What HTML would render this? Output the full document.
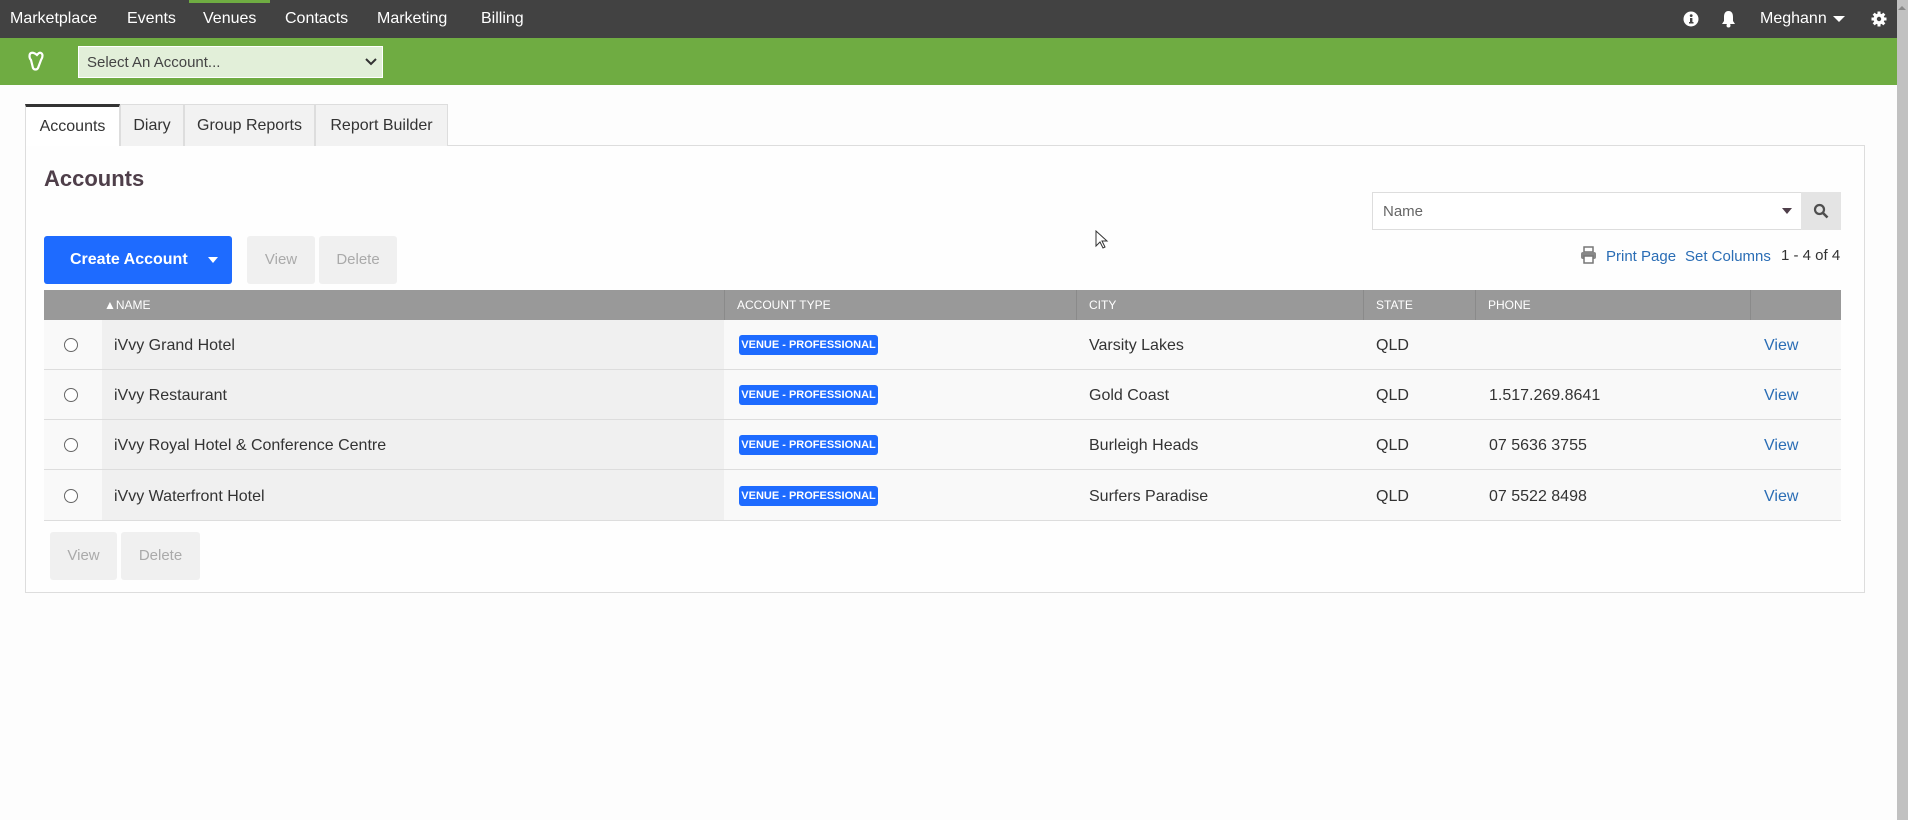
<!DOCTYPE html>
<html><head><meta charset="utf-8"><style>
*{box-sizing:border-box;margin:0;padding:0}
body{width:1908px;height:820px;overflow:hidden;background:#fdfdfd;font-family:"Liberation Sans",sans-serif;color:#333;position:relative}
.a{position:absolute}
.top{left:0;top:0;width:1897px;height:38px;background:#424242}
.nav{color:#fff;font-size:16px;top:10px}
.green{left:0;top:38px;width:1897px;height:47px;background:#6fac42}
.sel{left:78px;top:46px;width:305px;height:32px;background:#e2efd9;border:1px solid #fff;font-size:15px;color:#444;padding:7px 8px}
.tab{top:104px;height:42px;background:#f2f2f2;border:1px solid #ddd;border-bottom:none;font-size:16px;color:#333;text-align:center;line-height:42px}
.box{left:25px;top:145px;width:1840px;height:448px;border:1px solid #ddd;background:#fefefe}
.btn{background:#f0f0f0;color:#aaa;font-size:15px;text-align:center;border-radius:3px}
.th{top:290px;height:30px;background:#999;color:#fff;font-size:12px;line-height:30px}
.row{left:44px;width:1797px;height:50px;background:#f9f9f9;border-bottom:1px solid #ddd}
.cell{font-size:16px;color:#333}
.badge{background:#1e6bff;color:#fff;font-size:11px;font-weight:bold;border-radius:3px;height:20px;line-height:20px;width:139px;text-align:center}
.link{color:#2a6db5;font-size:16px}
.radio{width:14px;height:14px;border:1px solid #666;border-radius:50%;background:#fff}
</style></head><body>
<div class="a top"></div>
<div class="a" style="left:189px;top:0;width:81px;height:3px;background:#6fac42"></div>
<div class="a nav" style="left:10px">Marketplace</div>
<div class="a nav" style="left:127px">Events</div>
<div class="a nav" style="left:203px">Venues</div>
<div class="a nav" style="left:285px">Contacts</div>
<div class="a nav" style="left:377px">Marketing</div>
<div class="a nav" style="left:481px">Billing</div>
<svg class="a" style="left:1683px;top:11px" width="16" height="16" viewBox="0 0 16 16"><circle cx="8" cy="8" r="7.5" fill="#fff"/><rect x="7" y="7" width="2.4" height="5" fill="#424242"/><rect x="6" y="11" width="4.5" height="1.5" fill="#424242"/><circle cx="8.2" cy="4.6" r="1.4" fill="#424242"/></svg>
<svg class="a" style="left:1720px;top:10px" width="17" height="18" viewBox="0 0 17 18"><path d="M8.5 1C5 1 4 4 4 7v4l-2 3h13l-2-3V7c0-3-1-6-4.5-6z" fill="#fff"/><circle cx="8.5" cy="15.5" r="2" fill="#fff"/></svg>
<div class="a nav" style="left:1760px">Meghann</div>
<div class="a" style="left:1833px;top:16px;border:6px solid transparent;border-top:6px solid #fff;border-bottom:none"></div>
<svg class="a" style="left:1871px;top:11px" width="16" height="16" viewBox="0 0 16 16"><g fill="#fff"><circle cx="8" cy="8" r="5.5"/><rect x="6.5" y="0.5" width="3" height="15"/><rect x="0.5" y="6.5" width="15" height="3"/><rect x="6.5" y="0.5" width="3" height="15" transform="rotate(45 8 8)"/><rect x="6.5" y="0.5" width="3" height="15" transform="rotate(-45 8 8)"/></g><circle cx="8" cy="8" r="2.2" fill="#424242"/></svg>
<div class="a green"></div>
<svg class="a" style="left:26px;top:50px" width="22" height="22" viewBox="0 0 22 22"><path d="M5 3C3 4 3 8 5 10l2 8c1 2 4 2 5 0l3-8c2-3 2-6 0-7-2-1-3 1-4 2C10 4 7 2 5 3z" fill="none" stroke="#fff" stroke-width="2.2"/></svg>
<div class="a sel">Select An Account...</div>
<svg class="a" style="left:365px;top:58px" width="12" height="8" viewBox="0 0 12 8"><path d="M1 1l5 5 5-5" fill="none" stroke="#333" stroke-width="2"/></svg>
<div class="a" style="left:1897px;top:0;width:11px;height:820px;background:#c1c1c1"></div>
<div class="a" style="left:1898px;top:6px;border:4px solid transparent;border-bottom:4px solid #888;border-top:none"></div>
<div class="a box"></div>
<div class="a tab" style="left:25px;width:95px;background:#fff;border-top:3px solid #333;height:42px;line-height:40px;z-index:2">Accounts</div>
<div class="a tab" style="left:120px;width:64px">Diary</div>
<div class="a tab" style="left:184px;width:131px">Group Reports</div>
<div class="a tab" style="left:315px;width:133px">Report Builder</div>
<div class="a" style="left:44px;top:166px;font-size:22px;font-weight:bold;color:#4f3f4a">Accounts</div>
<div class="a" style="left:1372px;top:192px;width:430px;height:38px;border:1px solid #ddd;background:#fff;font-size:15px;color:#666;padding:10px 10px">Name</div>
<div class="a" style="left:1782px;top:208px;border:5px solid transparent;border-top:6px solid #4f3f4a;border-bottom:none"></div>
<div class="a" style="left:1801px;top:192px;width:40px;height:38px;background:#e4e4e4"></div>
<svg class="a" style="left:1813px;top:203px" width="16" height="16" viewBox="0 0 16 16"><circle cx="6.5" cy="6.5" r="4.5" fill="none" stroke="#4f4f4f" stroke-width="2.2"/><path d="M10 10l4.5 4.5" stroke="#4f4f4f" stroke-width="2.6"/></svg>
<svg class="a" style="left:1580px;top:246px" width="17" height="18" viewBox="0 0 17 18"><rect x="4" y="1" width="9" height="5" fill="none" stroke="#777" stroke-width="1.5"/><rect x="1" y="6" width="15" height="7" rx="2" fill="#888"/><rect x="4" y="10" width="9" height="7" fill="#fff" stroke="#777" stroke-width="1.5"/></svg>
<div class="a link" style="left:1606px;top:248px;font-size:15px">Print Page</div>
<div class="a link" style="left:1685px;top:248px;font-size:15px">Set Columns</div>
<div class="a cell" style="left:1781px;top:247px;font-size:15px">1 - 4 of 4</div>
<div class="a" style="left:44px;top:236px;width:188px;height:48px;background:#1e6bff;border-radius:3px;color:#fff;font-weight:bold;font-size:16px;line-height:48px;padding-left:26px">Create Account</div>
<div class="a" style="left:208px;top:257px;border:5px solid transparent;border-top:6px solid #fff;border-bottom:none"></div>
<div class="a btn" style="left:247px;top:236px;width:68px;height:48px;line-height:48px">View</div>
<div class="a btn" style="left:319px;top:236px;width:78px;height:48px;line-height:48px">Delete</div>
<div class="a th" style="left:44px;width:1797px"></div>
<div class="a th" style="left:102px;padding-left:2px;background:none">&#9650;NAME</div>
<div class="a th" style="left:724px;border-left:1px solid #8a8a8a;padding-left:12px;background:none">ACCOUNT TYPE</div>
<div class="a th" style="left:1076px;border-left:1px solid #8a8a8a;padding-left:12px;background:none">CITY</div>
<div class="a th" style="left:1363px;border-left:1px solid #8a8a8a;padding-left:12px;background:none">STATE</div>
<div class="a th" style="left:1475px;border-left:1px solid #8a8a8a;padding-left:12px;background:none">PHONE</div>
<div class="a th" style="left:1750px;border-left:1px solid #8a8a8a;width:1px;background:none"></div>

<div class="a row" style="top:320px"></div><div class="a" style="left:102px;top:320px;width:622px;height:50px;background:#f0f0f0;border-bottom:1px solid #ddd"></div>
<div class="a row" style="top:370px"></div><div class="a" style="left:102px;top:370px;width:622px;height:50px;background:#f0f0f0;border-bottom:1px solid #ddd"></div>
<div class="a row" style="top:420px"></div><div class="a" style="left:102px;top:420px;width:622px;height:50px;background:#f0f0f0;border-bottom:1px solid #ddd"></div>
<div class="a row" style="top:470px;height:51px"></div><div class="a" style="left:102px;top:470px;width:622px;height:51px;background:#f0f0f0;border-bottom:1px solid #ddd"></div>

<div class="a radio" style="left:64px;top:338px"></div>
<div class="a cell" style="left:114px;top:337px">iVvy Grand Hotel</div>
<div class="a badge" style="left:739px;top:335px">VENUE - PROFESSIONAL</div>
<div class="a cell" style="left:1089px;top:337px">Varsity Lakes</div>
<div class="a cell" style="left:1376px;top:337px">QLD</div>
<div class="a link" style="left:1764px;top:337px">View</div>

<div class="a radio" style="left:64px;top:388px"></div>
<div class="a cell" style="left:114px;top:387px">iVvy Restaurant</div>
<div class="a badge" style="left:739px;top:385px">VENUE - PROFESSIONAL</div>
<div class="a cell" style="left:1089px;top:387px">Gold Coast</div>
<div class="a cell" style="left:1376px;top:387px">QLD</div>
<div class="a cell" style="left:1489px;top:387px">1.517.269.8641</div>
<div class="a link" style="left:1764px;top:387px">View</div>

<div class="a radio" style="left:64px;top:438px"></div>
<div class="a cell" style="left:114px;top:437px">iVvy Royal Hotel &amp; Conference Centre</div>
<div class="a badge" style="left:739px;top:435px">VENUE - PROFESSIONAL</div>
<div class="a cell" style="left:1089px;top:437px">Burleigh Heads</div>
<div class="a cell" style="left:1376px;top:437px">QLD</div>
<div class="a cell" style="left:1489px;top:437px">07 5636 3755</div>
<div class="a link" style="left:1764px;top:437px">View</div>

<div class="a radio" style="left:64px;top:489px"></div>
<div class="a cell" style="left:114px;top:488px">iVvy Waterfront Hotel</div>
<div class="a badge" style="left:739px;top:486px">VENUE - PROFESSIONAL</div>
<div class="a cell" style="left:1089px;top:488px">Surfers Paradise</div>
<div class="a cell" style="left:1376px;top:488px">QLD</div>
<div class="a cell" style="left:1489px;top:488px">07 5522 8498</div>
<div class="a link" style="left:1764px;top:488px">View</div>

<div class="a btn" style="left:50px;top:532px;width:67px;height:48px;line-height:48px">View</div>
<div class="a btn" style="left:121px;top:532px;width:79px;height:48px;line-height:48px">Delete</div>
<svg class="a" style="left:1095px;top:230px" width="14" height="20" viewBox="0 0 14 20"><path d="M1 1v15l4-4 3 6 2-1-3-6h5z" fill="#fff" stroke="#333" stroke-width="1"/></svg>
</body></html>
